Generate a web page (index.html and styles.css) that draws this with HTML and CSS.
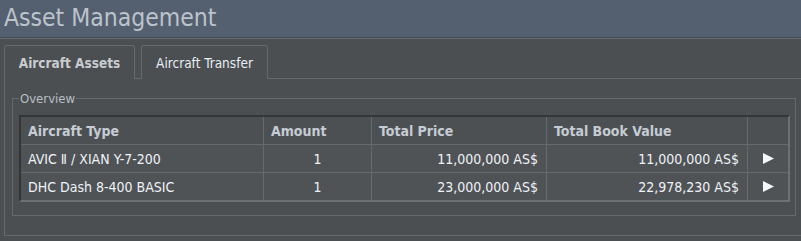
FILE: index.html
```html
<!doctype html>
<html>
<head>
<meta charset="utf-8">
<title>Asset Management</title>
<link rel="stylesheet" href="styles.css">
</head>

<body>
<div class="titlebar">Asset Management</div>
<div class="workspace">
	<ul class="tabs">
		<li class="tab active">Aircraft Assets</li>
		<li class="tab">Aircraft Transfer</li>
	</ul>
	<div class="tabpanel">
		<fieldset class="group">
			<legend>Overview</legend>
			<table class="grid">
				<colgroup>
					<col class="c1"><col class="c2"><col class="c3"><col class="c4"><col class="c5">
				</colgroup>
				<thead>
					<tr><th>Aircraft Type</th><th>Amount</th><th>Total Price</th><th>Total Book Value</th><th></th></tr>
				</thead>
				<tbody>
					<tr>
						<td>AVIC Ⅱ / XIAN Y-7-200</td>
						<td class="num">1</td>
						<td class="money">11,000,000 AS$</td>
						<td class="money">11,000,000 AS$</td>
						<td class="go"><svg width="11" height="11" viewBox="0 0 11 11"><polygon points="0,0 11,5.5 0,11" fill="#f4f7fa"/></svg></td>
					</tr>
					<tr>
						<td>DHC Dash 8-400 BASIC</td>
						<td class="num">1</td>
						<td class="money">23,000,000 AS$</td>
						<td class="money">22,978,230 AS$</td>
						<td class="go"><svg width="11" height="11" viewBox="0 0 11 11"><polygon points="0,0 11,5.5 0,11" fill="#f4f7fa"/></svg></td>
					</tr>
				</tbody>
			</table>
		</fieldset>
	</div>
</div>
</body>
</html>
```

FILE: styles.css
```css
*{margin:0; padding:0; box-sizing:border-box;}
html,body{width:801px; height:241px; overflow:hidden;}
body{background:#4c4f52; font-family:"DejaVu Sans","Liberation Sans",sans-serif; font-stretch:condensed; font-size:13.5px; color:#eef2f6;}
li{list-style:none;}

.titlebar{height:38px; background:#546070; border-bottom:1px solid #414955; color:#bcc3cb; font-size:24.5px; line-height:36px; padding-left:4px; white-space:nowrap;}
.workspace{border-top:1px solid #686c70; padding:6px 0 0 4px;}

.tabs{display:flex; gap:6px; height:34px; border-bottom:1px solid #676a6d;}
.tab{height:34px; padding-top:2px; border:1px solid #676a6d; border-bottom:none; border-radius:3px 3px 0 0; line-height:30px; text-align:center; color:#e6edf4; background:#4c4f52;}
.tab:nth-child(1){width:131px;}
.tab:nth-child(2){width:127px;}
.tab.active{font-weight:bold; color:#c8ccd0; height:34px; margin-bottom:-1px; position:relative;}

.tabpanel{height:157px; border-left:1px solid #676a6d; border-bottom:1px solid #676a6d; padding:12px 5px 0 7px;}

.group{width:784px; border:1px solid #676a6d; padding:9px 5px 13px 6px; font-size:13px;}
.group legend{padding:0 1px; color:#b9bec4; line-height:15px;}

.grid{width:771px; table-layout:fixed; border-collapse:separate; border-spacing:0; font-size:14px; border-top:2px solid #333537; border-left:2px solid #333537; border-right:2px solid #6d7073; border-bottom:2px solid #6d7073;}
.c1{width:243px;} .c2{width:108px;} .c3{width:175px;} .c4{width:201px;} .c5{width:40px;}
.grid th,.grid td{height:28px; border-right:1px solid #676a6d; border-bottom:1px solid #676a6d; padding:0 8px 0 7px; white-space:nowrap; vertical-align:middle;}
.grid th:last-child,.grid td:last-child{border-right:none;}
.grid tbody tr:last-child td{border-bottom:none; height:27px;}
.grid th{text-align:left; font-weight:bold; color:#c5ccd3; background:#4d5053;}
.grid td{background:#505356;}
.grid .num{text-align:center; padding:0;}
.grid .money{text-align:right;}
.grid .go{text-align:center; padding:0;}
.grid .go svg{display:block; margin:0 auto;}
```
